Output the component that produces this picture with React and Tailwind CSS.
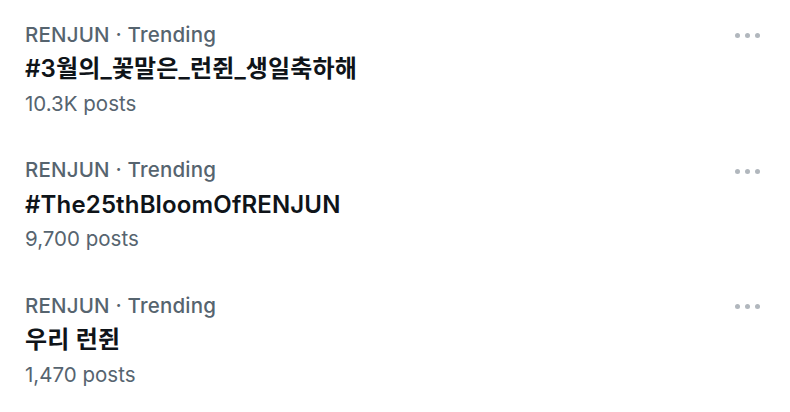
import React from "react";

const rows = [
  { title: "#3월의_꽃말은_런쥔_생일축하해", posts: "10.3K posts" },
  { title: "#The25thBloomOfRENJUN", posts: "9,700 posts" },
  { title: "우리 런쥔", posts: "1,470 posts" },
];

function Dots() {
  return (
    <div className="flex items-center gap-[5px] pt-[1px]">
      <span className="w-[5px] h-[5px] rounded-full bg-[#b1b7bd]" />
      <span className="w-[5px] h-[5px] rounded-full bg-[#b1b7bd]" />
      <span className="w-[5px] h-[5px] rounded-full bg-[#b1b7bd]" />
    </div>
  );
}

export default function App() {
  return (
    <div
      className="w-[790px] h-[412px] bg-white overflow-hidden pt-[18px] pl-[25px] pr-[30px] flex flex-col gap-[31.5px]"
      style={{ fontFamily: 'Inter, "Noto Sans CJK KR", sans-serif' }}
    >
      {rows.map((r, i) => (
        <div key={i} className="flex flex-col">
          <div className="flex items-center justify-between h-[34px]">
            <span className="text-[20.5px] font-medium text-[#56646f] tracking-[0.2px]">
              RENJUN · Trending
            </span>
            <Dots />
          </div>
          <div className="h-[34px] flex items-center text-[24px] font-semibold text-[#0f1419] tracking-[0.15px]">
            {r.title}
          </div>
          <div className="h-[36px] flex items-center text-[20.5px] text-[#56646f]">
            {r.posts}
          </div>
        </div>
      ))}
    </div>
  );
}
